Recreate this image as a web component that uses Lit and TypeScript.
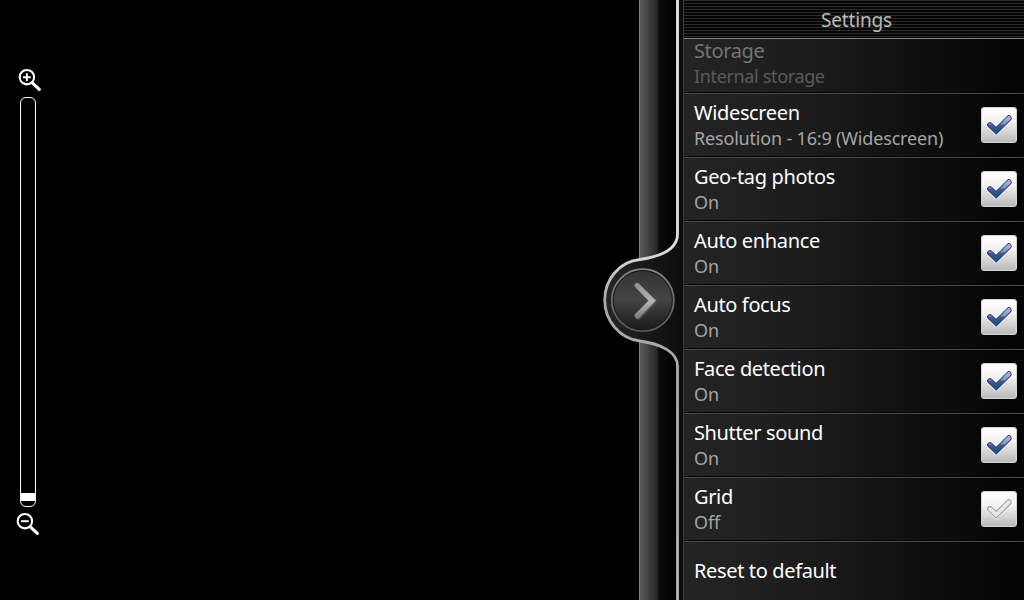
import { LitElement, html, css, svg } from 'lit';
import { customElement, property } from 'lit/decorators.js';

interface Setting {
  label: string;
  value?: string;
  checked?: boolean;
  disabled?: boolean;
}

const SETTINGS: Setting[] = [
  { label: 'Storage', value: 'Internal storage', disabled: true },
  {
    label: 'Widescreen',
    value: 'Resolution - 16:9 (Widescreen)',
    checked: true,
  },
  { label: 'Geo-tag photos', value: 'On', checked: true },
  { label: 'Auto enhance', value: 'On', checked: true },
  { label: 'Auto focus', value: 'On', checked: true },
  { label: 'Face detection', value: 'On', checked: true },
  { label: 'Shutter sound', value: 'On', checked: true },
  { label: 'Grid', value: 'Off', checked: false },
  { label: 'Reset to default' },
];

@customElement('check-box')
export class CheckBox extends LitElement {
  @property({ type: Boolean }) checked = false;

  static styles = css`
    :host {
      display: block;
      width: 36px;
      height: 36px;
    }

    svg {
      display: block;
    }
  `;

  render() {
    const tick = 'M9 18 L15.2 23.8 L27.8 11.2';
    return html`
      <svg width="36" height="36" viewBox="0 0 36 36">
        <defs>
          <linearGradient id="box" x1="0" y1="0" x2="0" y2="1">
            <stop offset="0" stop-color="#fff" />
            <stop offset="0.35" stop-color="#f6f6f6" />
            <stop offset="1" stop-color="#b8b8b8" />
          </linearGradient>
          <linearGradient id="tick" x1="0" y1="0" x2="0" y2="1">
            <stop offset="0" stop-color="#a3b7e0" />
            <stop offset="0.45" stop-color="#7590c8" />
            <stop offset="0.55" stop-color="#3b5a9d" />
            <stop offset="1" stop-color="#2c4c90" />
          </linearGradient>
        </defs>
        <rect
          x="0.5"
          y="0.5"
          width="35"
          height="35"
          rx="2.5"
          fill="url(#box)"
          stroke="#d2d2d2"
        />
        <g fill="none" stroke-linecap="round">
          <path d=${tick} stroke="#fff" stroke-opacity="0.6" stroke-width="7.4" />
          <path
            d=${tick}
            stroke=${this.checked ? '#34405c' : '#8f8f8f'}
            stroke-width="5.8"
          />
          <path
            d=${tick}
            stroke=${this.checked ? 'url(#tick)' : '#e6e6e6'}
            stroke-width="4"
          />
        </g>
      </svg>
    `;
  }
}

@customElement('setting-row')
export class SettingRow extends LitElement {
  @property({ attribute: false }) setting!: Setting;

  static styles = css`
    :host {
      box-sizing: border-box;
      display: flex;
      align-items: center;
      justify-content: space-between;
      flex: none;
      height: 64px;
      padding: 0 7px 0 10px;
      border-bottom: 1px solid #474747;
      box-shadow: inset 0 -1px #080808;
    }

    .text {
      display: flex;
      flex-direction: column;
      white-space: nowrap;
    }

    .label {
      color: #fff;
      font-size: 20px;
      line-height: 26px;
      letter-spacing: -0.36px;
    }

    .value {
      color: #a5a5a5;
      font-size: 18px;
      line-height: 25px;
      letter-spacing: -0.18px;
    }

    .disabled {
      align-self: flex-start;
    }

    .disabled .label {
      color: #757575;
      line-height: 24px;
    }

    .disabled .value {
      color: #5b5b5b;
      line-height: 27px;
      letter-spacing: -0.35px;
    }

    check-box {
      margin-bottom: 2px;
    }
  `;

  render() {
    const { label, value, checked, disabled } = this.setting;
    return html`
      <div class="text ${disabled ? 'disabled' : ''}">
        <span class="label">${label}</span>
        ${value ? html`<span class="value">${value}</span>` : ''}
      </div>
      ${checked === undefined
        ? ''
        : html`<check-box .checked=${checked}></check-box>`}
    `;
  }
}

@customElement('zoom-slider')
export class ZoomSlider extends LitElement {
  static styles = css`
    :host {
      display: flex;
      flex-direction: column;
      align-items: center;
      width: 26px;
      padding: 68px 0 0 15px;
    }

    svg {
      display: block;
      flex: none;
    }

    .plus {
      margin-left: 3px;
    }

    .minus {
      margin-top: 5px;
      margin-right: 1px;
    }

    .track {
      box-sizing: border-box;
      display: flex;
      align-items: flex-end;
      width: 16px;
      height: 410px;
      margin-top: 5px;
      padding-bottom: 5px;
      border: 1px solid #fff;
      border-radius: 6px;
    }

    .thumb {
      flex: 1;
      height: 8px;
      background: #fff;
    }
  `;

  private lens(name: string, sign: string) {
    return html`
      <svg class=${name} width="24" height="24" viewBox="0 0 24 24">
        ${svg`<g fill="none" stroke="#fff">
          <circle cx="8.9" cy="9.2" r="7.2" stroke-width="2.1" />
          <path d=${sign} stroke-width="2" />
          <path d="M14.3 14.8 L21.3 21.4" stroke-width="3.2" stroke-linecap="round" />
        </g>`}
      </svg>
    `;
  }

  render() {
    return html`
      ${this.lens('plus', 'M5 9.2 H12.8 M8.9 5.3 V13.1')}
      <div class="track"><div class="thumb"></div></div>
      ${this.lens('minus', 'M5 9.2 H12.8')}
    `;
  }
}

@customElement('drawer-handle')
export class DrawerHandle extends LitElement {
  static styles = css`
    :host {
      display: block;
      width: 84px;
      height: 600px;
    }

    svg {
      display: block;
    }
  `;

  render() {
    return html`
      <svg width="84" height="600" viewBox="600 0 84 600">
        <defs>
          <linearGradient id="edge" x1="0" y1="0" x2="0" y2="1">
            <stop offset="0" stop-color="#e8e8e8" />
            <stop offset="0.42" stop-color="#dcdcdc" />
            <stop offset="0.5" stop-color="#a8a8a8" />
            <stop offset="1" stop-color="#b4b4b4" />
          </linearGradient>
          <linearGradient id="face" x1="0" y1="0" x2="0" y2="1">
            <stop offset="0" stop-color="#333" />
            <stop offset="0.5" stop-color="#454545" />
            <stop offset="0.6" stop-color="#393939" />
            <stop offset="1" stop-color="#1a1a1a" />
          </linearGradient>
          <linearGradient id="ring" x1="0" y1="0" x2="0" y2="1">
            <stop offset="0" stop-color="#858585" />
            <stop offset="1" stop-color="#585858" />
          </linearGradient>
          <linearGradient id="body" x1="0" y1="0" x2="1" y2="0">
            <stop offset="0" stop-color="#262626" />
            <stop offset="1" stop-color="#0c0c0c" />
          </linearGradient>
          <linearGradient id="arrow" x1="0" y1="0" x2="0" y2="1">
            <stop offset="0" stop-color="#929292" />
            <stop offset="0.5" stop-color="#b4b4b4" />
            <stop offset="1" stop-color="#858585" />
          </linearGradient>
        </defs>
        <path
          d="M683 -4 H678 V234 C678 249 661 257 640 259.5 C619 261.5 604.7 280 604.7 300 C604.7 320 619 338.5 640 341 C661 343.5 678 352 678 366 V604 H683 Z"
          fill="url(#body)"
        />
        <path
          d="M677.5 -4 V234 C677.5 249 661 256.5 640 259.5 C619 261.5 604.7 280 604.7 300 C604.7 320 619 338.5 640 341 C661 344 677.5 352 677.5 366 V604"
          fill="none"
          stroke="url(#edge)"
          stroke-width="2.8"
        />
        <circle
          cx="642.8"
          cy="300.2"
          r="31"
          fill="url(#face)"
          stroke="url(#ring)"
          stroke-width="1.8"
        />
        <circle
          cx="642.8"
          cy="300.2"
          r="29.5"
          fill="none"
          stroke="#191919"
          stroke-width="1"
        />
        <path
          d="M638.2 286.5 L653.6 301.6 L638.5 316.8"
          fill="none"
          stroke="#555"
          stroke-width="5.2"
          stroke-linecap="round"
        />
        <path
          d="M637.2 285.5 L652.2 300.6 L637.2 315.6"
          fill="none"
          stroke="url(#arrow)"
          stroke-width="5.3"
          stroke-linecap="round"
        />
      </svg>
    `;
  }
}

@customElement('app-root')
export class AppRoot extends LitElement {
  static styles = css`
    :host {
      position: relative;
      display: flex;
      width: 1024px;
      height: 600px;
      overflow: hidden;
      background: #000;
      font-family: 'Noto Sans', 'Open Sans', sans-serif;
    }

    .viewfinder {
      flex: 1;
    }

    .rail {
      box-sizing: border-box;
      width: 44px;
      border-left: 1px solid #808080;
      background: linear-gradient(
        to right,
        #575757 0,
        #4a4a4a 6px,
        #242424 18px,
        #0b0b0b 18px,
        #000 35px
      );
    }

    .handle {
      position: absolute;
      top: 0;
      left: 600px;
    }

    .panel {
      box-sizing: border-box;
      display: flex;
      flex-direction: column;
      width: 341px;
      border-left: 1px solid #3c3c3c;
      background: linear-gradient(to right, #242424, #1c1c1c 35%, #030303);
    }

    .title {
      box-sizing: border-box;
      flex: none;
      height: 39px;
      padding: 1px 0 0 5px;
      border-bottom: 1px solid #858585;
      background: repeating-linear-gradient(
        to bottom,
        #2b2b2b 0,
        #2b2b2b 1px,
        #050505 1px,
        #050505 3px
      );
      color: #bababa;
      font-size: 19px;
      line-height: 39px;
      letter-spacing: -0.15px;
      text-align: center;
    }

    .list {
      display: flex;
      flex-direction: column;
      flex: 1;
      min-height: 0;
    }

    .first {
      height: 55px;
    }

    .last {
      height: 58px;
      border-bottom-color: transparent;
      box-shadow: none;
    }
  `;

  private position(i: number) {
    if (i === 0) return 'first';
    return i === SETTINGS.length - 1 ? 'last' : '';
  }

  render() {
    return html`
      <div class="viewfinder"><zoom-slider></zoom-slider></div>
      <div class="rail"></div>
      <div class="panel">
        <div class="title">Settings</div>
        <div class="list">
          ${SETTINGS.map(
            (setting, i) => html`
              <setting-row
                class=${this.position(i)}
                .setting=${setting}
              ></setting-row>
            `
          )}
        </div>
      </div>
      <drawer-handle class="handle"></drawer-handle>
    `;
  }
}
